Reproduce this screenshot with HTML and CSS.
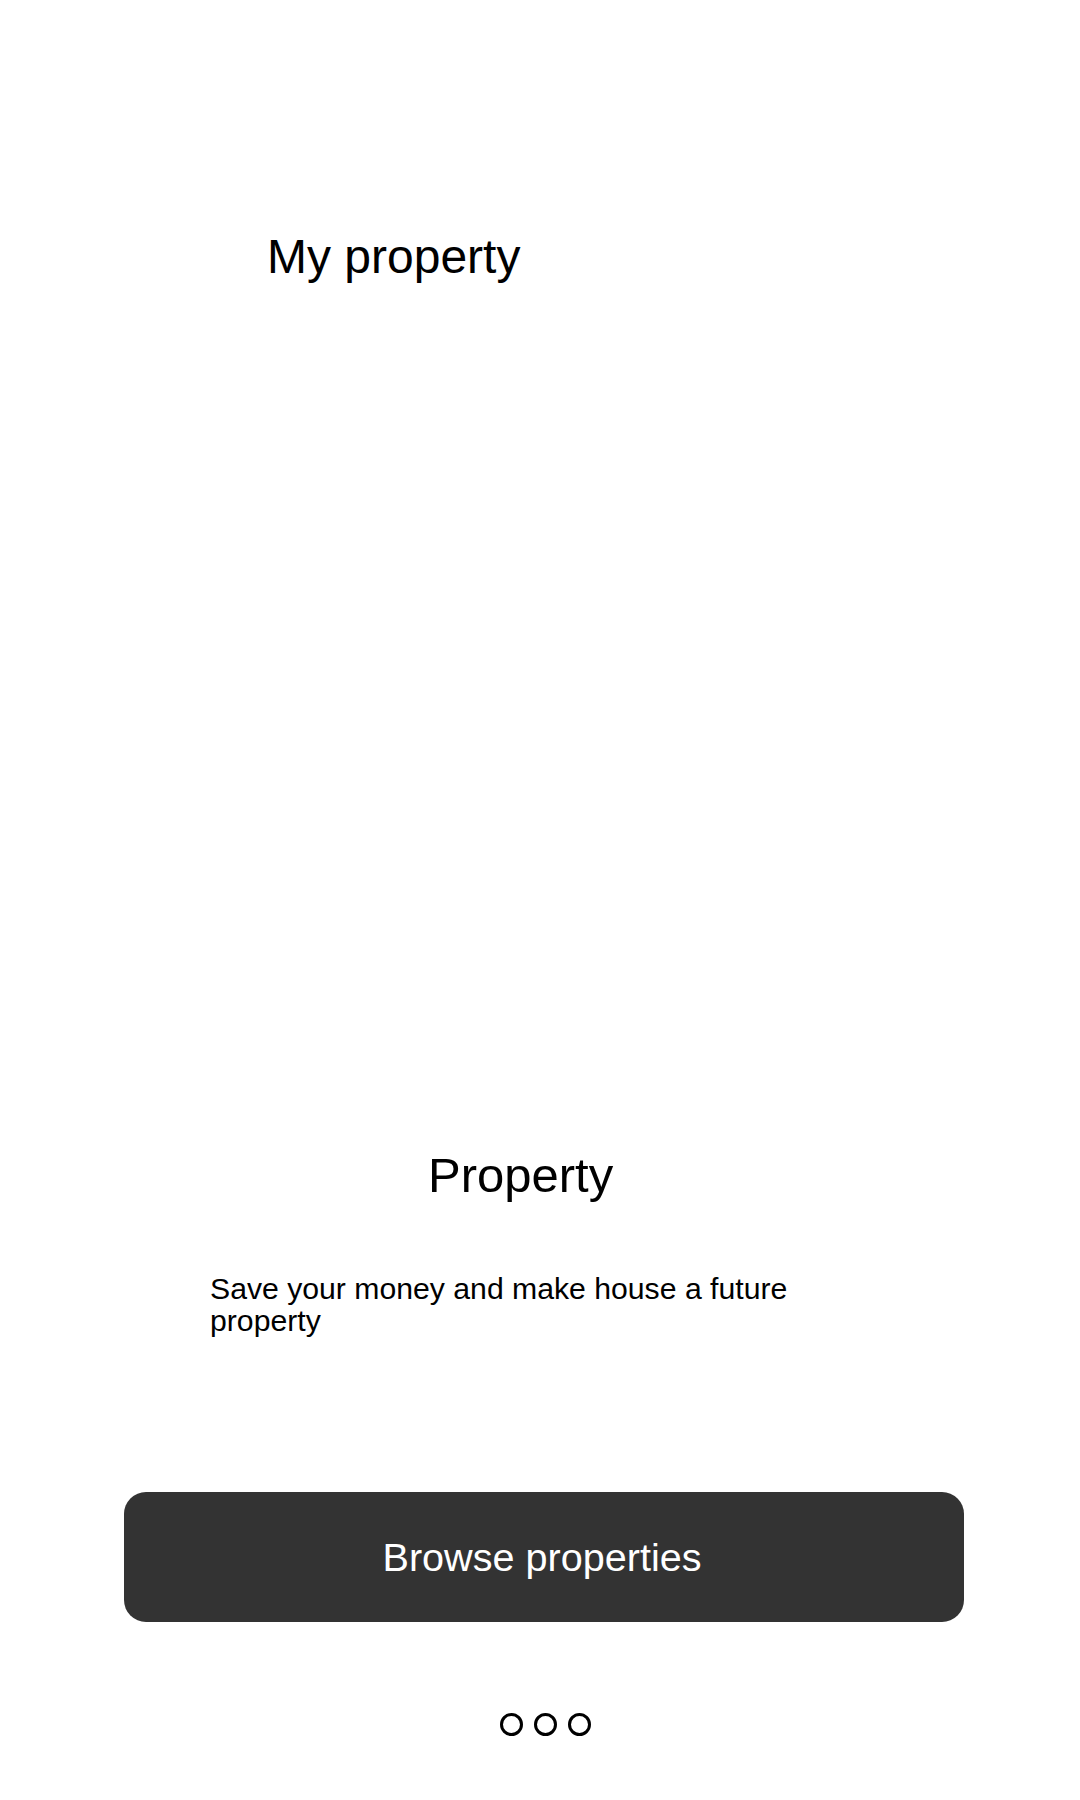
FILE: index.html
```html
<!DOCTYPE html>
<html lang="en">
<head>
<meta charset="utf-8">
<title>My property</title>
<link rel="stylesheet" href="styles.css">
</head>
<body>
<main class="screen">
  <h1 class="title">My property</h1>
  <section class="intro">
    <h2 class="heading">Property</h2>
    <p class="desc">Save your money and make house a future property</p>
  </section>
  <button class="cta" type="button">Browse properties</button>
  <div class="dots">
    <span class="dot"></span>
    <span class="dot"></span>
    <span class="dot"></span>
  </div>
</main>
</body>
</html>
```
FILE: styles.css
```css
html, body {
  margin: 0;
  padding: 0;
  background: #ffffff;
}
body {
  font-family: "Liberation Sans", Arial, sans-serif;
  color: #000000;
}
.screen {
  width: 1080px;
  height: 1800px;
  display: flex;
  flex-direction: column;
  box-sizing: border-box;
  padding-top: 229px;
}
.title {
  margin: 0;
  padding-left: 267px;
  font-size: 48px;
  font-weight: 400;
  line-height: 55px;
}
.intro {
  margin-top: 864px;
  display: flex;
  flex-direction: column;
}
.heading {
  margin: 0;
  padding-left: 428px;
  font-size: 49px;
  font-weight: 400;
  line-height: 55px;
}
.desc {
  margin: 70px 0 0 210px;
  width: 600px;
  font-size: 30.2px;
  line-height: 32px;
}
.cta {
  margin: 155px 0 0 124px;
  width: 840px;
  height: 130px;
  border: none;
  border-radius: 22px;
  background: #333333;
  color: #ffffff;
  font-family: "Liberation Sans", Arial, sans-serif;
  font-size: 39.6px;
  padding: 0 4px 0 0;
}
.dots {
  margin-top: 91px;
  display: flex;
  justify-content: center;
  gap: 11px;
  padding-left: 10px;
}
.dot {
  width: 23px;
  height: 23px;
  box-sizing: border-box;
  border: 3px solid #000000;
  border-radius: 50%;
}
```
